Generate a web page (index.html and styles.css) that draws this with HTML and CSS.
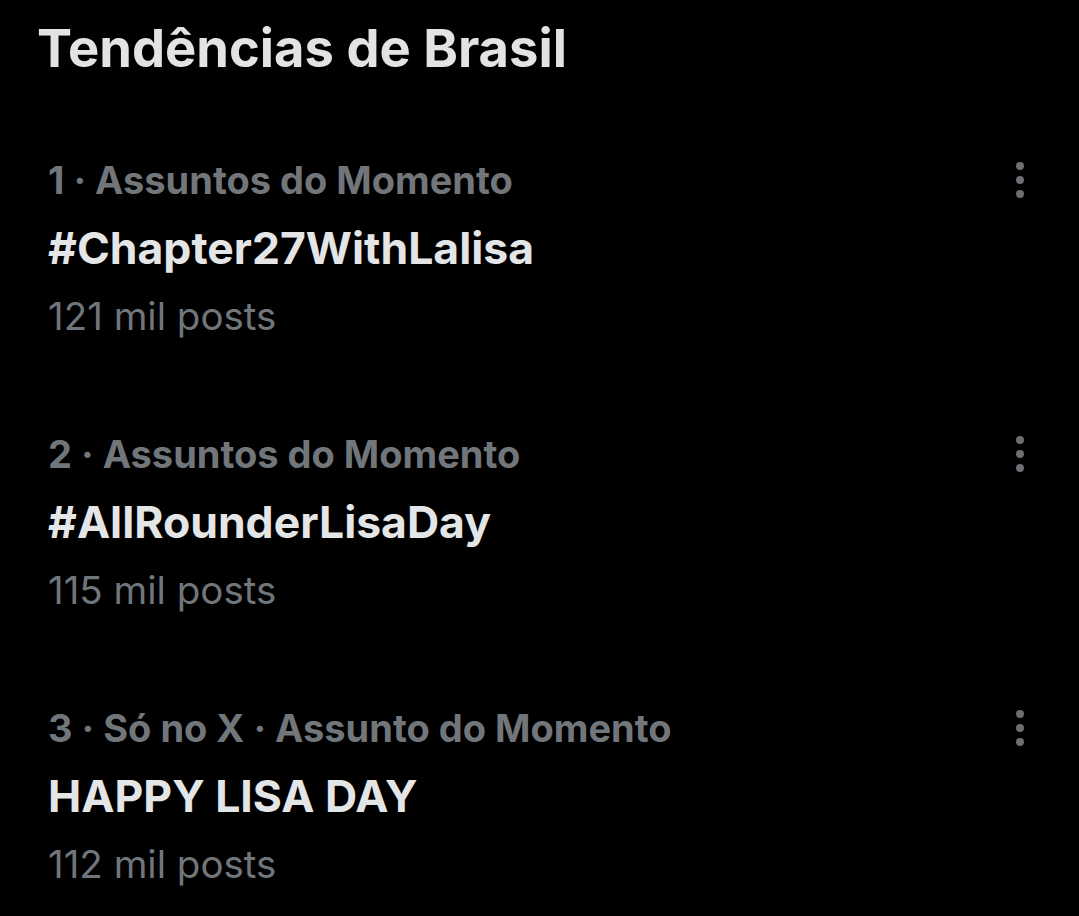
FILE: index.html
```html
<!DOCTYPE html>
<html lang="pt-BR">
<head>
<meta charset="utf-8">
<title>Tendências de Brasil</title>
<link rel="stylesheet" href="styles.css">
</head>
<body>
<main class="panel">
  <h1 class="heading">Tendências de Brasil</h1>
  <ul class="trends">
    <li class="trend">
      <div class="trend-body">
        <div class="meta">1 · Assuntos do Momento</div>
        <div class="name">#Chapter27WithLalisa</div>
        <div class="count">121 mil posts</div>
      </div>
      <span class="more" aria-label="Mais"><i></i><i></i><i></i></span>
    </li>
    <li class="trend">
      <div class="trend-body">
        <div class="meta">2 · Assuntos do Momento</div>
        <div class="name">#AllRounderLisaDay</div>
        <div class="count">115 mil posts</div>
      </div>
      <span class="more" aria-label="Mais"><i></i><i></i><i></i></span>
    </li>
    <li class="trend">
      <div class="trend-body">
        <div class="meta">3 · Só no X · Assunto do Momento</div>
        <div class="name">HAPPY LISA DAY</div>
        <div class="count">112 mil posts</div>
      </div>
      <span class="more" aria-label="Mais"><i></i><i></i><i></i></span>
    </li>
  </ul>
</main>
</body>
</html>
```
FILE: styles.css
```css
html, body {
  margin: 0;
  padding: 0;
  background: #000;
}
body {
  font-family: Inter, "Noto Sans", "Liberation Sans", sans-serif;
  color: #e7e9ea;
}
.panel {
  width: 1079px;
  height: 916px;
  overflow: hidden;
}
.heading {
  margin: 0;
  padding-left: 37px;
  font-size: 52.5px;
  line-height: 96px;
  font-weight: 700;
  color: #e2e3e4;
}
.trends {
  list-style: none;
  margin: 50px 0 0;
  padding: 0;
  display: flex;
  flex-direction: column;
  gap: 70px;
}
.trend {
  display: flex;
  align-items: flex-start;
  justify-content: space-between;
  padding: 0 55px 0 48px;
}
.trend-body {
  display: flex;
  flex-direction: column;
}
.meta {
  font-size: 38px;
  line-height: 68px;
  font-weight: 700;
  color: #71767b;
}
.name {
  font-size: 44.5px;
  line-height: 68px;
  font-weight: 700;
  color: #e4e5e6;
}
.count {
  font-size: 38.5px;
  line-height: 68px;
  font-weight: 400;
  color: #71767b;
}
.more {
  display: flex;
  flex-direction: column;
  gap: 6px;
  margin-top: 16px;
}
.more i {
  display: block;
  width: 8px;
  height: 8px;
  border-radius: 50%;
  background: #6b6f73;
}
```
